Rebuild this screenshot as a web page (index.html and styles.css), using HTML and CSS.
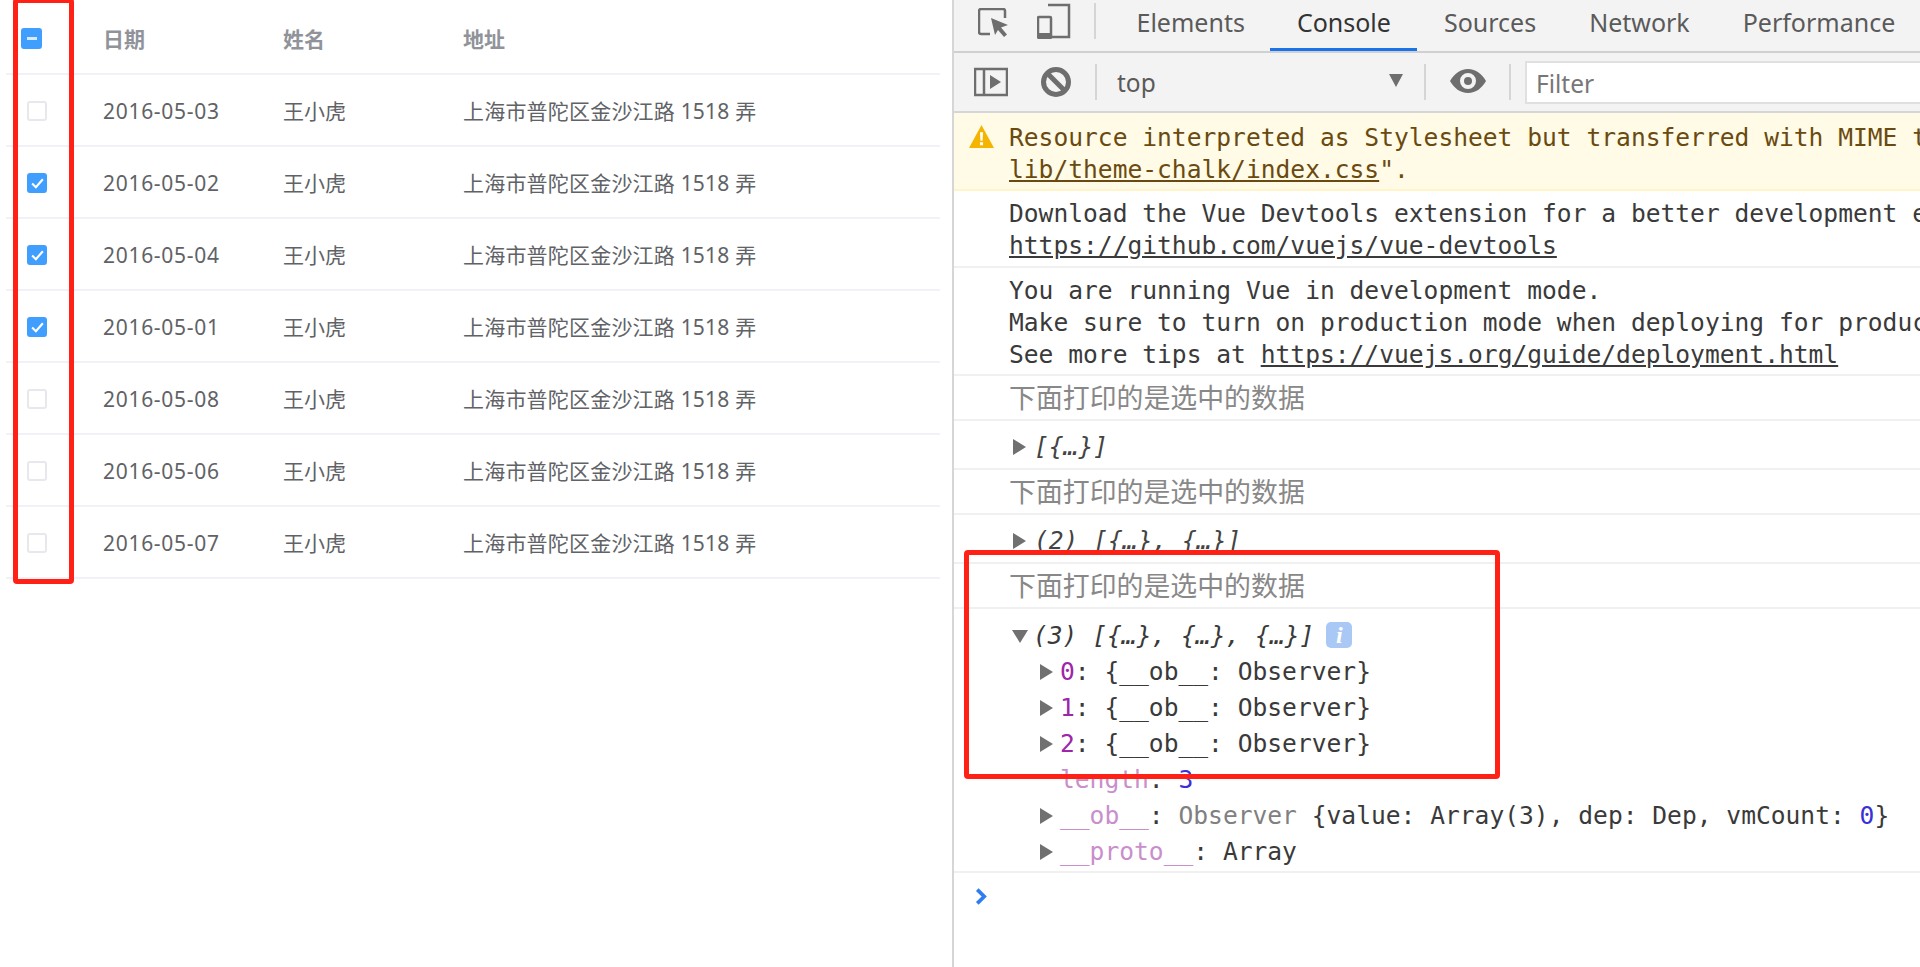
FILE: index.html
```html
<!DOCTYPE html>
<html lang="zh">
<head>
<meta charset="utf-8">
<title>Console</title>
<link rel="stylesheet" href="styles.css">
</head>
<body>
<div class="page">
  <section class="table-panel">
    <div class="row head">
      <div class="cell-check"><span class="check check-head on"><span class="dash"></span></span></div>
      <div>日期</div><div>姓名</div><div>地址</div>
    </div>
    <div class="row">
      <div class="cell-check"><span class="check"></span></div>
      <div class="date">2016-05-03</div><div class="name">王小虎</div><div class="addr">上海市普陀区金沙江路 1518 弄</div>
    </div>
    <div class="row">
      <div class="cell-check"><span class="check on"><svg class="tick" viewBox="0 0 14 12"><path d="M2 6l3.5 3.5L12 2"/></svg></span></div>
      <div class="date">2016-05-02</div><div class="name">王小虎</div><div class="addr">上海市普陀区金沙江路 1518 弄</div>
    </div>
    <div class="row">
      <div class="cell-check"><span class="check on"><svg class="tick" viewBox="0 0 14 12"><path d="M2 6l3.5 3.5L12 2"/></svg></span></div>
      <div class="date">2016-05-04</div><div class="name">王小虎</div><div class="addr">上海市普陀区金沙江路 1518 弄</div>
    </div>
    <div class="row">
      <div class="cell-check"><span class="check on"><svg class="tick" viewBox="0 0 14 12"><path d="M2 6l3.5 3.5L12 2"/></svg></span></div>
      <div class="date">2016-05-01</div><div class="name">王小虎</div><div class="addr">上海市普陀区金沙江路 1518 弄</div>
    </div>
    <div class="row">
      <div class="cell-check"><span class="check"></span></div>
      <div class="date">2016-05-08</div><div class="name">王小虎</div><div class="addr">上海市普陀区金沙江路 1518 弄</div>
    </div>
    <div class="row">
      <div class="cell-check"><span class="check"></span></div>
      <div class="date">2016-05-06</div><div class="name">王小虎</div><div class="addr">上海市普陀区金沙江路 1518 弄</div>
    </div>
    <div class="row">
      <div class="cell-check"><span class="check"></span></div>
      <div class="date">2016-05-07</div><div class="name">王小虎</div><div class="addr">上海市普陀区金沙江路 1518 弄</div>
    </div>
  </section>

  <section class="devtools">
    <div class="tabs">
      <svg class="ico-inspect" viewBox="0 0 30 30"><path class="st" d="M12 26H3a2 2 0 0 1-2-2V3a2 2 0 0 1 2-2h22a2 2 0 0 1 2 2v7"/><path class="fl" d="M13 10l17 7-7 2.500 6 7-3 2.500-6-7-3 5z"/></svg>
      <svg class="ico-device" viewBox="0 0 34 36"><path class="st" d="M11 2h21v32H12"/><rect class="st" x="1" y="14" width="13" height="21" rx="1"/><path class="fl" d="M1 30h13v5H1z"/></svg>
      <span class="sep sep-tab"></span>
      <span class="tab first">Elements</span>
      <span class="tab active">Console</span>
      <span class="tab">Sources</span>
      <span class="tab">Network</span>
      <span class="tab">Performance</span>
    </div>
    <div class="toolbar">
      <svg class="ico-side" viewBox="0 0 34 30"><path class="st" d="M1 2h32v26H1zM10 2v26"/><path class="fl" d="M16 8l11 7-11 7z"/></svg>
      <svg class="ico-block" viewBox="0 0 30 30"><circle class="st thick" cx="15" cy="15" r="12.500"/><path class="st thick" d="M6 6l18 18"/></svg>
      <span class="sep sep-a"></span>
      <span class="context">top</span>
      <span class="caret"></span>
      <span class="sep sep-b"></span>
      <svg class="ico-eye" viewBox="0 0 36 24"><path class="fl" fill-rule="evenodd" d="M18 0c8 0 14 5 18 12-4 7-10 12-18 12S4 19 0 12C4 5 10 0 18 0zm0 4a8 8 0 1 0 0 16 8 8 0 0 0 0-16zm0 4a4 4 0 1 1 0 8 4 4 0 0 1 0-8z"/></svg>
      <span class="sep sep-c"></span>
      <div class="filter">Filter</div>
    </div>
    <div class="log">
      <div class="msg warn">
        <svg class="ico-warn" viewBox="0 0 24 22"><path class="warn-tri" d="M12 0l12 22H0z"/><path class="warn-mark" d="M10.500 7h3l-.5 8h-2zM10.500 16.500h3v3h-3z"/></svg>
        <div>Resource interpreted as Stylesheet but transferred with MIME t</div>
        <div><span class="u">lib/theme-chalk/index.css</span>".</div>
      </div>
      <div class="msg m2">
        <div>Download the Vue Devtools extension for a better development e</div>
        <div class="u">https://github.com/vuejs/vue-devtools</div>
      </div>
      <div class="msg m3">
        <div>You are running Vue in development mode.</div>
        <div>Make sure to turn on production mode when deploying for produc</div>
        <div>See more tips at <span class="u">https://vuejs.org/guide/deployment.html</span></div>
      </div>
      <div class="msg cn">下面打印的是选中的数据</div>
      <div class="msg arr"><span class="tri"></span><i>[{…}]</i></div>
      <div class="msg cn">下面打印的是选中的数据</div>
      <div class="msg arr"><span class="tri"></span><i>(2) [{…}, {…}]</i></div>
      <div class="msg cn">下面打印的是选中的数据</div>
      <div class="msg tree">
        <div class="tree-top"><span class="tri down"></span><i>(3) [{…}, {…}, {…}]</i><span class="info">i</span></div>
        <div class="node"><span class="tri"></span><span class="idx">0</span>: {__ob__: Observer}</div>
        <div class="node"><span class="tri"></span><span class="idx">1</span>: {__ob__: Observer}</div>
        <div class="node"><span class="tri"></span><span class="idx">2</span>: {__ob__: Observer}</div>
        <div class="node plain"><span class="faint">length</span>: <span class="num">3</span></div>
        <div class="node"><span class="tri"></span><span class="faint">__ob__</span>: <span class="grey">Observer</span> {value: Array(3), dep: Dep, vmCount: <span class="num">0</span>}</div>
        <div class="node"><span class="tri"></span><span class="faint">__proto__</span>: Array</div>
      </div>
      <div class="prompt"><svg class="ico-prompt" viewBox="0 0 11 16"><path d="M2 1.500L8.500 8 2 14.500"/></svg></div>
    </div>
  </section>

  <div class="mark mark-left"></div>
  <div class="mark mark-right"></div>
</div>
</body>
</html>
```
FILE: styles.css
```css
* { box-sizing: border-box; }
html, body { margin: 0; height: 100%; background: #fff; }
.page { position: relative; display: flex; width: 1920px; height: 967px; overflow: hidden; }

/* table */
.table-panel { width: 952px; flex: none; padding: 0 12px 0 6px; font-family: "Noto Sans", "Noto Sans CJK SC", sans-serif; font-size: 21px; color: #606266; }
.row { display: grid; grid-template-columns: 97px 180px 180px 1fr; align-items: center; height: 72px; border-bottom: 2px solid #f0f2f8; }
.row.head { height: 75px; padding-top: 2px; color: #909399; font-weight: 700; }
.date { letter-spacing: .7px; padding-top: 2px; }
.name { padding-bottom: 1px; }
.addr { letter-spacing: .2px; padding-bottom: 1px; }
.cell-check { display: flex; padding: 2px 0 0 21px; }
.check { display: flex; align-items: center; justify-content: center; width: 20px; height: 20px; border: 2px solid #e6e8ee; border-radius: 3px; background: #fff; }
.check.on { background: #409eff; border-color: #409eff; }
.check-head { margin-left: -6px; width: 21px; height: 21px; }
.dash { width: 10px; height: 3px; background: #d8eaff; }
.tick { width: 15px; height: 13px; fill: none; stroke: #fff; stroke-width: 2; }

/* devtools */
.devtools { flex: 1; min-width: 0; border-left: 2px solid #d6d6d6; overflow: hidden; font-family: "Noto Sans", sans-serif; }
.tabs { display: flex; align-items: center; height: 53px; background: #f3f3f3; border-bottom: 2px solid #d0d0d0; padding-left: 24px; font-size: 25px; color: #5a5a5a; white-space: nowrap; }
.st { fill: none; stroke: #6e6e6e; stroke-width: 2.500; }
.st.thick { stroke-width: 5; }
.fl { fill: #6e6e6e; }
.ico-inspect { width: 30px; height: 30px; flex: none; margin-top: -6px; }
.ico-device { width: 34px; height: 36px; flex: none; margin-left: 29px; margin-top: -9px; }
.sep { display: block; width: 2px; flex: none; background: #d5d5d5; }
.sep-tab { height: 36px; margin: -10px 0 0 23px; }
.tab { display: flex; align-items: center; height: 51px; padding: 0 26.500px 7px; flex: none; }
.tab.first { margin-left: 14px; }
.tab.active { color: #333; box-shadow: inset 0 -3px 0 #1a73e8; margin-left: -1px; }
.toolbar { display: flex; align-items: center; height: 60px; background: #f3f3f3; border-bottom: 2px solid #d6d6d6; padding-left: 20px; color: #5a5a5a; font-size: 24.500px; }
.ico-side { width: 34px; height: 30px; flex: none; }
.ico-block { width: 30px; height: 30px; flex: none; margin-left: 33px; }
.sep-a { height: 36px; margin-left: 24px; }
.context { width: 272px; margin-left: 20px; flex: none; }
.caret { width: 0; height: 0; flex: none; border-left: 7.500px solid transparent; border-right: 7.500px solid transparent; border-top: 13px solid #6e6e6e; margin-top: -3px; }
.sep-b { height: 36px; margin-left: 21px; }
.ico-eye { width: 36px; height: 24px; flex: none; margin-left: 24px; margin-top: -3px; }
.sep-c { height: 36px; margin-left: 23px; }
.filter { flex: 1; height: 43px; margin-left: 14px; padding-left: 9px; background: #fff; border: 2px solid #e0e0e0; border-right: 0; line-height: 41px; color: #777; }

/* log */
.log { font-family: "DejaVu Sans Mono", monospace; font-size: 24.600px; line-height: 32px; color: #3a3a3a; white-space: nowrap; }
.msg { position: relative; padding-left: 55px; border-bottom: 2px solid #f0f0f0; }
.warn { height: 78px; padding-top: 9px; background: #fffbe6; border-bottom-color: #fff5c8; color: #6a4a10; }
.ico-warn { position: absolute; left: 15px; top: 12px; width: 25px; height: 23px; }
.warn-tri { fill: #f4b400; }
.warn-mark { fill: #fff; }
.u { text-decoration: underline; }
.m2 { height: 77px; padding-top: 7px; }
.m3 { height: 108px; padding-top: 7px; }
.cn { height: 45px; line-height: 42px; font-family: "Noto Sans CJK SC", sans-serif; font-size: 26.900px; color: #888; }
.arr { height: 49px; display: flex; align-items: center; padding: 4px 0 0 59px; color: #444; }
.arr i { margin-left: 0; }
.tree { height: 264px; padding: 9px 0 0 58px; line-height: 36px; }
.tree-top { display: flex; align-items: center; height: 36px; }
.tree-top i { margin-left: 0; }
.tri { display: inline-block; width: 0; height: 0; border-top: 8px solid transparent; border-bottom: 8px solid transparent; border-left: 13px solid #707070; margin-right: 8px; vertical-align: 0; }
.node .tri { margin-right: 7px; }
.tri.down { border-left: 8px solid transparent; border-right: 8px solid transparent; border-top: 13px solid #707070; border-bottom: 0; margin-right: 5px; }
.info { display: flex; align-items: center; justify-content: center; width: 26px; height: 26px; margin: -2px 0 0 12px; border-radius: 5px; background: #a9c8f5; color: #fff; font-family: "Liberation Serif", serif; font-style: italic; font-weight: 700; font-size: 24px; }
.node { padding-left: 28px; }
.node.plain { padding-left: 48px; }
.idx { color: #9c27a8; }
.faint { color: #c98ecc; }
.num { color: #3a2fd8; }
.grey { color: #808080; }
.prompt { padding: 15px 0 0 21px; }
.ico-prompt { display: block; width: 12px; height: 17px; fill: none; stroke: #2f7df0; stroke-width: 3.500; }

/* annotations */
.mark { position: absolute; border: 5px solid #ff2116; border-radius: 4px; }
.mark-left { left: 13px; top: -2px; width: 61px; height: 586px; }
.mark-right { left: 964px; top: 550px; width: 536px; height: 229px; }
```
